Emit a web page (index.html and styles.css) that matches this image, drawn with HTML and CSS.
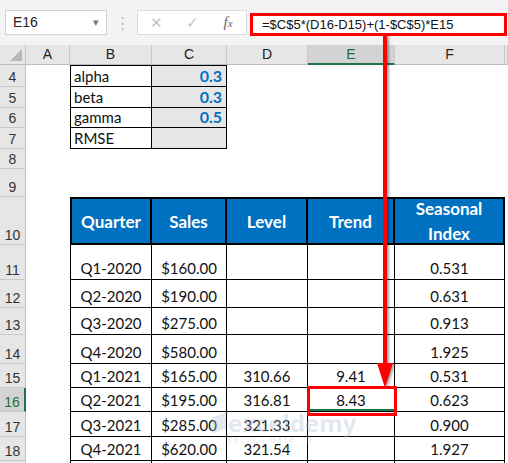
FILE: index.html
```html
<!DOCTYPE html>
<html lang="en">

<head>
    <meta charset="UTF-8">
    <title>Holt-Winters Trend</title>
    <link rel="stylesheet" href="styles.css">
</head>

<body>
    <div class="app">
        <!-- formula bar -->
        <div class="toolbar">
            <div class="name-box">E16<span class="drop">&#9662;</span></div>
            <div class="grip">&#8942;</div>
            <div class="fx-box">
                <span class="btn">&#10005;</span>
                <span class="btn">&#10003;</span>
                <span class="fx"><i>f</i><i class="x">x</i></span>
            </div>
            <div class="formula">=$C$5*(D16-D15)+(1-$C$5)*E15</div>
        </div>

        <!-- worksheet -->
        <div class="sheet">
            <div class="corner"></div>
            <div class="ch">A</div>
            <div class="ch">B</div>
            <div class="ch">C</div>
            <div class="ch">D</div>
            <div class="ch sel">E</div>
            <div class="ch">F</div>
            <div class="ch"></div>

            <div class="rh">4</div><div class="c"></div>
            <div class="lbl first">alpha</div><div class="val first">0.3</div>
            <div class="c"></div><div class="c"></div><div class="c"></div><div class="c"></div>

            <div class="rh">5</div><div class="c"></div>
            <div class="lbl">beta</div><div class="val">0.3</div>
            <div class="c"></div><div class="c"></div><div class="c"></div><div class="c"></div>

            <div class="rh">6</div><div class="c"></div>
            <div class="lbl">gamma</div><div class="val">0.5</div>
            <div class="c"></div><div class="c"></div><div class="c"></div><div class="c"></div>

            <div class="rh">7</div><div class="c"></div>
            <div class="lbl">RMSE</div><div class="val"></div>
            <div class="c"></div><div class="c"></div><div class="c"></div><div class="c"></div>

            <div class="rh">8</div><div class="c"></div><div class="c"></div><div class="c"></div>
            <div class="c"></div><div class="c"></div><div class="c"></div><div class="c"></div>

            <div class="rh">9</div><div class="c"></div><div class="c"></div><div class="c"></div>
            <div class="c"></div><div class="c"></div><div class="c"></div><div class="c"></div>

            <div class="rh">10</div><div class="c"></div>
            <div class="th left">Quarter</div>
            <div class="th">Sales</div>
            <div class="th">Level</div>
            <div class="th">Trend</div>
            <div class="th">Seasonal<br>Index</div>
            <div class="c"></div>

            <div class="rh">11</div><div class="c"></div>
            <div class="td left">Q1-2020</div><div class="td">$160.00</div><div class="td"></div><div class="td"></div><div class="td">0.531</div>
            <div class="c"></div>

            <div class="rh">12</div><div class="c"></div>
            <div class="td left">Q2-2020</div><div class="td">$190.00</div><div class="td"></div><div class="td"></div><div class="td">0.631</div>
            <div class="c"></div>

            <div class="rh">13</div><div class="c"></div>
            <div class="td left">Q3-2020</div><div class="td">$275.00</div><div class="td"></div><div class="td"></div><div class="td">0.913</div>
            <div class="c"></div>

            <div class="rh">14</div><div class="c"></div>
            <div class="td left">Q4-2020</div><div class="td">$580.00</div><div class="td"></div><div class="td"></div><div class="td">1.925</div>
            <div class="c"></div>

            <div class="rh">15</div><div class="c"></div>
            <div class="td left">Q1-2021</div><div class="td">$165.00</div><div class="td">310.66</div><div class="td">9.41</div><div class="td">0.531</div>
            <div class="c"></div>

            <div class="rh sel">16</div><div class="c"></div>
            <div class="td left">Q2-2021</div><div class="td">$195.00</div><div class="td">316.81</div><div class="td active">8.43</div><div class="td">0.623</div>
            <div class="c"></div>

            <div class="rh">17</div><div class="c"></div>
            <div class="td left">Q3-2021</div><div class="td">$285.00</div><div class="td">321.33</div><div class="td"></div><div class="td">0.900</div>
            <div class="c"></div>

            <div class="rh">18</div><div class="c"></div>
            <div class="td left">Q4-2021</div><div class="td">$620.00</div><div class="td">321.54</div><div class="td"></div><div class="td">1.927</div>
            <div class="c"></div>

            <div class="rh"></div><div class="c"></div>
            <div class="td left"></div><div class="td"></div><div class="td"></div><div class="td"></div><div class="td"></div>
            <div class="c"></div>
        </div>

        <!-- watermark -->
        <div class="mark">
            <div class="mark-top"><span class="cube"></span>exceldemy</div>
            <div class="mark-sub">EXCEL · DATA · BI</div>
        </div>

        <!-- callout: formula -> cell -->
        <svg class="arrow" width="508" height="463" viewBox="0 0 508 463">
            <line x1="385" y1="35" x2="385" y2="368" stroke="#ff0000" stroke-width="4" />
            <polygon points="377,363 393,363 385,388" fill="#ff0000" />
        </svg>
        <div class="hit"></div>
    </div>
</body>

</html>
```

FILE: styles.css
```css
* {
    padding: 0;
    margin: 0;
    box-sizing: border-box;
}

body {
    width: 508px;
    height: 463px;
    overflow: hidden;
    background: #fff;
    font-family: Lato, "Liberation Sans", sans-serif;
}

.app {
    position: relative;
    width: 508px;
    height: 463px;
    overflow: hidden;
}

/* 公式栏 */
.toolbar {
    display: flex;
    align-items: flex-start;
    height: 45px;
    padding-top: 10px;
    background: #f3f3f3;
    font-family: "Liberation Sans", sans-serif;
}

.name-box {
    position: relative;
    width: 102px;
    height: 25px;
    margin-left: 5px;
    padding-left: 7px;
    line-height: 23px;
    font-size: 14px;
    color: #222;
    background: #fff;
    border: 1px solid #d4d4d4;
}

.name-box .drop {
    position: absolute;
    right: 7px;
    top: 0;
    font-size: 11px;
    color: #777;
}

.grip {
    width: 30px;
    text-align: center;
    line-height: 25px;
    font-size: 15px;
    color: #b8b8b8;
}

.fx-box {
    display: flex;
    align-items: center;
    width: 110px;
    height: 25px;
    background: #fff;
    border: 1px solid #dcdcdc;
}

.fx-box .btn {
    width: 36px;
    text-align: center;
    font-size: 15px;
    color: #c4c4c4;
}

.fx-box .fx {
    width: 36px;
    text-align: center;
    font-family: "Liberation Serif", serif;
    font-size: 15px;
    color: #666;
}

.fx-box .fx .x {
    font-size: 11px;
}

.formula {
    width: 257px;
    height: 23px;
    margin: 3px 0 0 3px;
    padding-left: 9px;
    line-height: 18px;
    font-size: 13px;
    color: #111;
    background: #fff;
    border: 3px solid #ff0000;
}

/* 工作表网格 */
.sheet {
    display: grid;
    grid-template-columns: 26px 44px 82px 75px 81px 87px 110px 1fr;
    grid-template-rows: 20px 22px 21px 20px 21px 20px 28px 48px 35px 28px 27px 29px 24px 24px 25px 24px 30px;
    font-size: 15px;
    color: #111;
}

.corner {
    position: relative;
    background: #e6e6e6;
    border-right: 1px solid #c3c3c3;
    border-bottom: 1px solid #bcbcbc;
}

.corner::after {
    content: "";
    position: absolute;
    right: 3px;
    bottom: 3px;
    border-left: 12px solid transparent;
    border-bottom: 12px solid #b6b6b6;
}

.ch {
    text-align: center;
    line-height: 19px;
    font-family: "Liberation Sans", sans-serif;
    font-size: 14px;
    color: #222;
    background: #e6e6e6;
    border-right: 1px solid #c9c9c9;
    border-bottom: 1px solid #bcbcbc;
}

.ch.sel {
    color: #1d6b40;
    background: #d3d3d3;
    border-bottom: 2px solid #217346;
}

.rh {
    display: flex;
    align-items: flex-end;
    justify-content: center;
    padding-bottom: 1px;
    font-family: "Liberation Sans", sans-serif;
    font-size: 14px;
    color: #333;
    background: #e6e6e6;
    border-right: 1px solid #c3c3c3;
    border-bottom: 1px solid #c8c8c8;
}

.rh.sel {
    color: #1d6b40;
    background: #d3d3d3;
    border-right: 2px solid #217346;
}

.c {
    background: #fff;
}

/* 参数表 */
.lbl,
.val {
    display: flex;
    align-items: flex-end;
    padding-bottom: 1px;
    border-right: 1px solid #000;
    border-bottom: 1px solid #000;
}

.lbl {
    padding-left: 3px;
    border-left: 1px solid #000;
}

.val {
    justify-content: flex-end;
    padding-right: 4px;
    font-size: 16px;
    font-weight: 700;
    color: #0070c0;
    background: #e7e6e6;
}

.first {
    border-top: 1px solid #000;
}

/* 数据表 */
.th {
    display: flex;
    align-items: center;
    justify-content: center;
    text-align: center;
    line-height: 25px;
    font-size: 17px;
    font-weight: 700;
    color: #fff;
    background: #0070c0;
    border-top: 2px solid #000;
    border-right: 2px solid #000;
    border-bottom: 2px solid #000;
}

.th.left {
    border-left: 2px solid #000;
}

.td {
    display: flex;
    align-items: flex-end;
    justify-content: center;
    padding-bottom: 2px;
    border-right: 1px solid #000;
    border-bottom: 1px solid #000;
}

.td.left {
    border-left: 1px solid #000;
}

.td.active {
    box-shadow: inset 0 -2px 0 #217346;
}

/* 水印 */
.mark {
    position: absolute;
    left: 212px;
    top: 411px;
    opacity: .35;
    color: #aebbd6;
    pointer-events: none;
}

.mark-top {
    display: flex;
    align-items: center;
    font-family: "Open Sans", sans-serif;
    font-size: 24px;
    font-weight: 700;
    line-height: 24px;
}

.cube {
    width: 14px;
    height: 16px;
    margin-right: 2px;
    background: #aebbd6;
    transform: skewY(-20deg);
}

.mark-sub {
    margin: 1px 0 0 16px;
    font-size: 7px;
    letter-spacing: 2px;
}

/* 红色箭头与框 */
.arrow {
    position: absolute;
    left: 0;
    top: 0;
    filter: drop-shadow(2px 1px 1px rgba(0, 0, 0, .35));
}

.hit {
    position: absolute;
    left: 307px;
    top: 386px;
    width: 90px;
    height: 30px;
    border: 3px solid #ff0000;
}
```
